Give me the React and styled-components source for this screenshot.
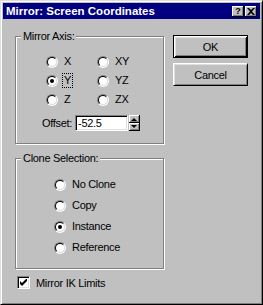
import React from 'react';
import styled, { createGlobalStyle } from 'styled-components';

// win98 style dialog: grey face, navy caption, etched group boxes
const GlobalStyle = createGlobalStyle`
  html, body {
    margin: 0;
    padding: 0;
    background: #c0c0c0;
  }
  body {
    font-family: "Liberation Sans", Arial, sans-serif;
    font-size: 11px;
    letter-spacing: -0.3px;
    color: #000;
  }
`;

const Window = styled.div`
  box-sizing: border-box;
  width: 263px;
  height: 305px;
  padding: 2px;
  background: #c0c0c0;
  border: 1px solid;
  border-color: #dfdfdf #000 #000 #dfdfdf;
  box-shadow: inset 1px 1px #fff, inset -1px -1px #808080;
  display: flex;
  flex-direction: column;
`;

const TitleBar = styled.div`
  height: 16px;
  display: flex;
  align-items: center;
  padding: 0 3px 0 3px;
  background: #000080;
  color: #fff;
  font-weight: bold;
  font-size: 11.5px;
  letter-spacing: 0;
`;

const TitleText = styled.span`
  flex: 1;
  line-height: 16px;
  white-space: nowrap;
`;

const CaptionButtons = styled.div`
  display: flex;
  gap: 1px;
`;

const CaptionButton = styled.div`
  box-sizing: border-box;
  width: 12px;
  height: 11px;
  display: flex;
  align-items: center;
  justify-content: center;
  background: #c0c0c0;
  color: #000;
  font-size: 9px;
  font-weight: bold;
  line-height: 9px;
  box-shadow: inset -1px -1px #000, inset 1px 1px #fff, inset -2px -2px #808080;
`;

const Body = styled.div`
  display: flex;
  gap: 9px;
  padding: 16px 0 0 12px;
`;

const LeftColumn = styled.div`
  display: flex;
  flex-direction: column;
  padding-top: 1px;
`;

const Group = styled.div`
  position: relative;
  box-sizing: border-box;
  width: 149px;
  height: ${p => p.$h}px;
  margin-top: ${p => p.$mt || 0}px;
  border: 1px solid #808080;
  box-shadow: inset 1px 1px #fff, 1px 1px #fff;
`;

const GroupLabel = styled.span`
  position: absolute;
  top: -7px;
  left: 5px;
  padding: 0 2px;
  line-height: 13px;
  background: #c0c0c0;
`;

const AxisGrid = styled.div`
  display: grid;
  grid-template-columns: 51px 51px;
  grid-auto-rows: 19px;
  padding: 15px 0 0 30px;
`;

const CloneList = styled.div`
  display: flex;
  flex-direction: column;
  padding: 15px 0 0 38px;
`;

const RadioRow = styled.label`
  display: flex;
  align-items: center;
  gap: 4px;
  height: ${p => p.$h}px;
`;

const RadioOuter = styled.span`
  box-sizing: border-box;
  flex: none;
  width: 12px;
  height: 12px;
  border-radius: 50%;
  border: 1px solid;
  border-color: #808080 #fff #fff #808080;
  display: flex;
  align-items: center;
  justify-content: center;
`;

const RadioInner = styled.span`
  box-sizing: border-box;
  width: 10px;
  height: 10px;
  border-radius: 50%;
  border: 1px solid;
  border-color: #000 #dfdfdf #dfdfdf #000;
  background: #fff;
  display: flex;
  align-items: center;
  justify-content: center;
  &::after {
    content: '';
    width: 4px;
    height: 4px;
    border-radius: 50%;
    background: #000;
    display: ${p => (p.$checked ? 'block' : 'none')};
  }
`;

const Caption = styled.span`
  line-height: 13px;
  padding: 0 1px;
  border: 1px dotted ${p => (p.$focused ? '#000' : 'transparent')};
  white-space: nowrap;
`;

const OffsetRow = styled.div`
  display: flex;
  align-items: center;
  margin-top: 6px;
  padding-left: 26px;
`;

const OffsetLabel = styled.span`
  margin-right: 3px;
`;

const Field = styled.div`
  box-sizing: border-box;
  width: 53px;
  height: 16px;
  padding: 0 0 0 2px;
  line-height: 12px;
  background: #fff;
  border: 1px solid;
  border-color: #808080 #fff #fff #808080;
  box-shadow: inset 1px 1px #000, inset -1px -1px #dfdfdf;
  display: flex;
  align-items: center;
`;

const Spinner = styled.div`
  display: flex;
  flex-direction: column;
  margin-left: 1px;
`;

const SpinButton = styled.div`
  box-sizing: border-box;
  width: 11px;
  height: 8px;
  background: #c0c0c0;
  box-shadow: inset -1px -1px #000, inset 1px 1px #fff, inset -2px -2px #808080;
  display: flex;
  align-items: center;
  justify-content: center;
  &::after {
    content: '';
    width: 0;
    height: 0;
    margin: ${p => (p.$down ? '0 1px 1px 0' : '0 1px 0 0')};
    border-left: 3px solid transparent;
    border-right: 3px solid transparent;
    ${p => (p.$down ? 'border-top: 3px solid #000;' : 'border-bottom: 3px solid #000;')}
  }
`;

const CheckRow = styled.label`
  display: flex;
  align-items: center;
  gap: 6px;
  margin: 7px 0 0 2px;
  height: 13px;
`;

const CheckBox = styled.span`
  box-sizing: border-box;
  width: 13px;
  height: 13px;
  background: #fff;
  border: 1px solid;
  border-color: #808080 #fff #fff #808080;
  box-shadow: inset 1px 1px #000, inset -1px -1px #dfdfdf;
  display: flex;
  align-items: center;
  justify-content: center;
`;

const RightColumn = styled.div`
  display: flex;
  flex-direction: column;
  gap: 5px;
`;

const PushButton = styled.button`
  box-sizing: border-box;
  width: 75px;
  height: 23px;
  padding: 0;
  background: #c0c0c0;
  color: #000;
  font: inherit;
  letter-spacing: inherit;
  border: 1px solid;
  border-color: ${p => (p.$default ? '#000' : '#fff #000 #000 #fff')};
  box-shadow: ${p =>
    p.$default
      ? 'inset 1px 1px #fff, inset -1px -1px #000, inset 2px 2px #dfdfdf, inset -2px -2px #808080'
      : 'inset 1px 1px #dfdfdf, inset -1px -1px #808080'};
`;

const axes = [
  { id: 'X' },
  { id: 'XY' },
  { id: 'Y', checked: true, focused: true },
  { id: 'YZ' },
  { id: 'Z' },
  { id: 'ZX' }
];

const clones = [
  { id: 'No Clone' },
  { id: 'Copy' },
  { id: 'Instance', checked: true },
  { id: 'Reference' }
];

const Radio = ({ label, checked, focused, h }) => (
  <RadioRow $h={h}>
    <RadioOuter>
      <RadioInner $checked={checked} />
    </RadioOuter>
    <Caption $focused={focused}>{label}</Caption>
  </RadioRow>
);

export default function App() {
  return (
    <>
      <GlobalStyle />
      <Window>
        <TitleBar>
          <TitleText>Mirror: Screen Coordinates</TitleText>
          <CaptionButtons>
            <CaptionButton>?</CaptionButton>
            <CaptionButton>
              <svg width="8" height="7" viewBox="0 0 8 7">
                <path d="M0 0h2l2 2 2-2h2L5 3.5 8 7H6L4 5 2 7H0l3-3.5z" fill="#000" />
              </svg>
            </CaptionButton>
          </CaptionButtons>
        </TitleBar>

        <Body>
          <LeftColumn>
            <Group $h={108}>
              <GroupLabel>Mirror Axis:</GroupLabel>
              <AxisGrid>
                {axes.map(a => (
                  <Radio key={a.id} label={a.id} checked={a.checked} focused={a.focused} h={19} />
                ))}
              </AxisGrid>
              <OffsetRow>
                <OffsetLabel>Offset:</OffsetLabel>
                <Field>-52.5</Field>
                <Spinner>
                  <SpinButton />
                  <SpinButton $down />
                </Spinner>
              </OffsetRow>
            </Group>

            <Group $h={111} $mt={14}>
              <GroupLabel>Clone Selection:</GroupLabel>
              <CloneList>
                {clones.map(c => (
                  <Radio key={c.id} label={c.id} checked={c.checked} h={21} />
                ))}
              </CloneList>
            </Group>

            <CheckRow>
              <CheckBox>
                <svg width="7" height="7" viewBox="0 0 7 7">
                  <path d="M0 2l2 2 5-5v3L2 7 0 5z" fill="#000" />
                </svg>
              </CheckBox>
              <span>Mirror IK Limits</span>
            </CheckRow>
          </LeftColumn>

          <RightColumn>
            <PushButton $default>OK</PushButton>
            <PushButton>Cancel</PushButton>
          </RightColumn>
        </Body>
      </Window>
    </>
  );
}
